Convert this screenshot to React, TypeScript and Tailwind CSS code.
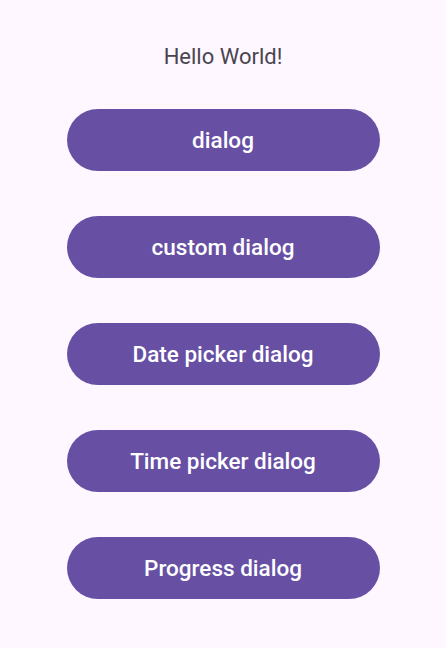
const buttons = ["dialog", "custom dialog", "Date picker dialog", "Time picker dialog", "Progress dialog"];

export default function App() {
  return (
    <div className="min-h-[648px] w-full bg-[#fef7ff] flex flex-col items-center font-['Roboto',sans-serif]">
      <div className="mt-[43px] h-[28px] leading-[28px] text-[22px] text-[#49454f]">Hello World!</div>
      <div className="mt-[38px] flex flex-col gap-[45px]">
        {buttons.map((b) => (
          <button
            key={b}
            className="w-[313px] h-[62px] rounded-full bg-[#6750a4] text-white text-[22.5px] font-medium pt-[2px]"
          >
            {b}
          </button>
        ))}
      </div>
    </div>
  );
}
